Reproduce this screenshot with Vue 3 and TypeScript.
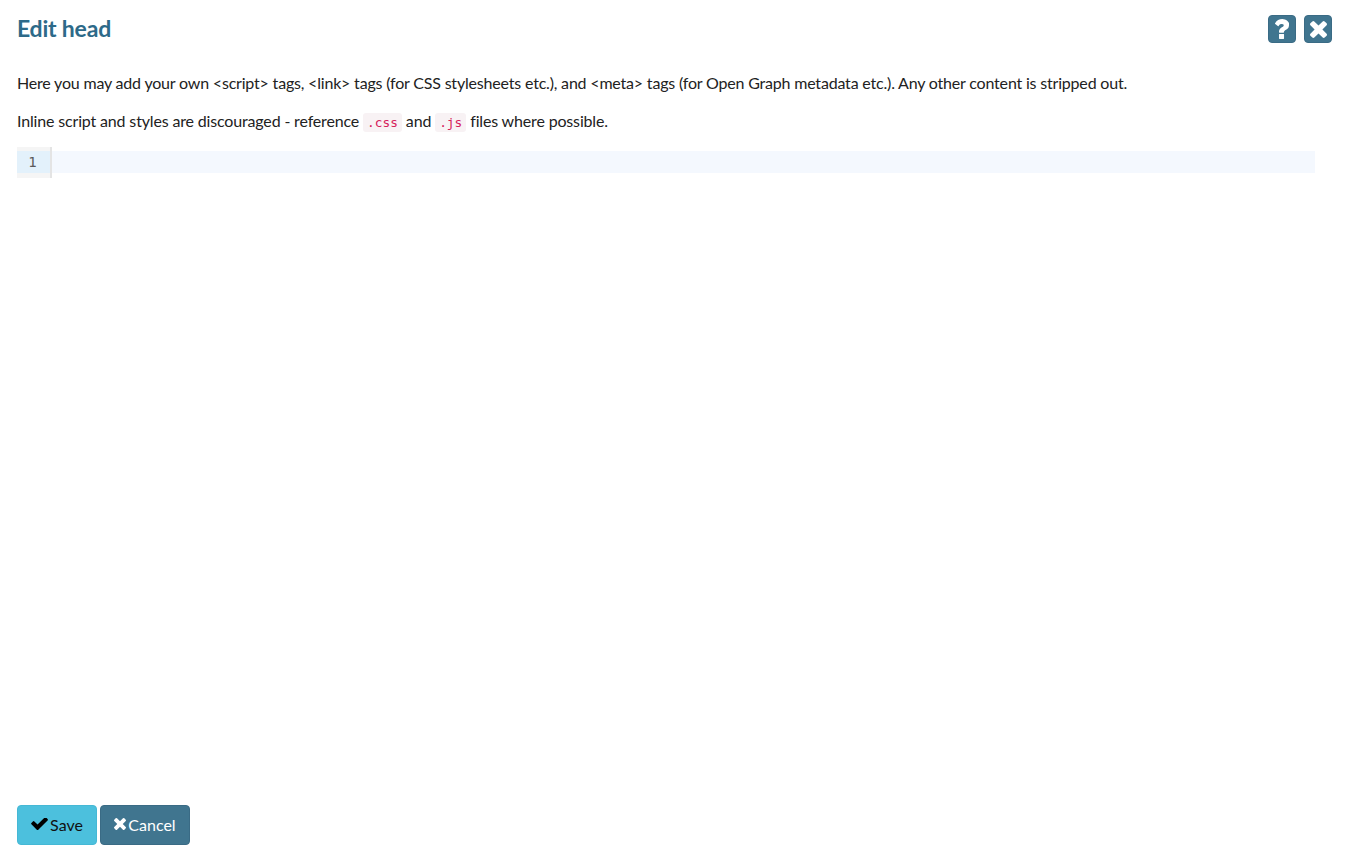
<script setup lang="ts">
const title = 'Edit head'
</script>
<template>
  <div class="page">
    <header class="head">
      <h1>{{ title }}</h1>
      <div class="tools">
        <button class="tool" aria-label="Help">
          <svg viewBox="128 271 892 1265" width="14" height="20"><path fill="#fff" d="M704 1256v240q0 16-12 28t-28 12H424q-16 0-28-12t-12-28v-240q0-16 12-28t28-12h240q16 0 28 12t12 28zm316-600q0 54-15.500 101t-35 76.500-55 59.500-57.500 43.500-61 35.500q-41 23-68.500 65T700 1100q0 17-12 32.500t-28 15.500H420q-15 0-25.500-18.500T384 1092v-45q0-83 65-156.500T592 782q50-23 71-48t21-65q0-36-40-63.500T551 578q-58 0-96 26-31 22-95 102-12 15-29 15-12 0-24-8L143 590q-13-10-15.500-25t5.500-28q160-266 464-266 80 0 161 31t146 83 106 127.500 41 158.500z"/></svg>
        </button>
        <button class="tool" aria-label="Close">
          <svg viewBox="110 366 1188 1188" width="17" height="17"><path fill="#fff" d="M1298 1322q0 40-28 68l-136 136q-28 28-68 28t-68-28L704 1232l-294 294q-28 28-68 28t-68-28L138 1390q-28-28-28-68t28-68l294-294-294-294q-28-28-28-68t28-68l136-136q28-28 68-28t68 28l294 294 294-294q28-28 68-28t68 28l136 136q28 28 28 68t-28 68L976 960l294 294q28 28 28 68z"/></svg>
        </button>
      </div>
    </header>
    <p class="first">Here you may add your own &lt;script&gt; tags, &lt;link&gt; tags (for CSS stylesheets etc.), and &lt;meta&gt; tags (for Open Graph metadata etc.). Any other content is stripped out.</p>
    <p class="second">Inline script and styles are discouraged - reference <code>.css</code> and <code>.js</code> files where possible.</p>
    <div class="editor">
      <div class="gutter"><span class="num">1</span></div>
      <div class="line"></div>
    </div>
    <div class="spacer"></div>
    <footer class="actions">
      <button class="btn save">
        <svg viewBox="121 408 1550 1110" width="17" height="12"><path fill="#000" d="M1671 566q0 40-28 68l-724 724-136 136q-28 28-68 28t-68-28l-136-136-362-362q-28-28-28-68t28-68l136-136q28-28 68-28t68 28l294 295 656-657q28-28 68-28t68 28l136 136q28 28 28 68z"/></svg>Save
      </button>
      <button class="btn cancel">
        <svg viewBox="110 366 1188 1188" width="12" height="12"><path fill="#fff" d="M1298 1322q0 40-28 68l-136 136q-28 28-68 28t-68-28L704 1232l-294 294q-28 28-68 28t-68-28L138 1390q-28-28-28-68t28-68l294-294-294-294q-28-28-28-68t28-68l136-136q28-28 68-28t68 28l294 294 294-294q28-28 68-28t68 28l136 136q28 28 28 68t-28 68L976 960l294 294q28 28 28 68z"/></svg>Cancel
      </button>
    </footer>
  </div>
</template>
<style>
html, body { margin: 0; background: #fff; }
</style>
<style scoped>
.page { height: 862px; box-sizing: border-box; padding: 0 17px; display: flex; flex-direction: column; font-family: Lato, sans-serif; font-size: 16px; color: #222; overflow: hidden; }
.head { display: flex; justify-content: space-between; align-items: flex-start; height: 73px; }
h1 { margin: 14px 0 0; font-size: 23px; line-height: 29px; font-weight: 700; color: #2d6a89; letter-spacing: -0.2px; }
.tools { display: flex; gap: 8px; margin-top: 15px; }
.tool { width: 28px; height: 28px; padding: 0; border: 1px solid #3a6b85; border-radius: 4px; background: #40758f; display: flex; align-items: center; justify-content: center; }
p { margin: 0; line-height: 20px; }
.first { letter-spacing: -0.19px; }
.second { margin-top: 18px; letter-spacing: -0.16px; }
code { font-family: "DejaVu Sans Mono", monospace; font-size: 12.800px; letter-spacing: 0; color: #d6225c; background: #f8f2f4; padding: 2px 4px; border-radius: 3px; }
.editor { display: flex; margin-top: 14px; height: 31px; width: 1298px; }
.gutter { width: 35px; height: 31px; box-sizing: border-box; padding: 4px 0; background: #f5f5f5; border-right: 2px solid #e4e4e4; display: flex; }
.num { flex: 1; height: 22px; box-sizing: border-box; padding-right: 2px; background: #e3f1fb; font-family: "DejaVu Sans Mono", monospace; font-size: 14px; color: #5a5a5a; text-align: center; line-height: 22px; }
.line { flex: 1; height: 22px; margin-top: 4px; background: #f4f8fe; }
.spacer { flex: 1; }
.actions { display: flex; gap: 3px; margin-bottom: 17px; }
.btn { height: 40px; border-radius: 4px; font-family: Lato, sans-serif; font-size: 16px; letter-spacing: 0; display: flex; align-items: center; justify-content: center; padding: 0 0 2px; }
.btn svg { margin-right: 2px; }
.save { width: 80px; background: #4cc0dd; border: 1px solid #45b8d5; color: #111; }
.cancel { width: 90px; background: #40758f; border: 1px solid #3a6b85; color: #fff; }
</style>
